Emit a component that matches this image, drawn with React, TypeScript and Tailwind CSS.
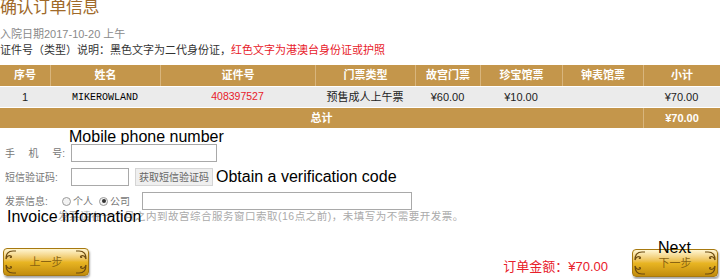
import React from "react";

const cols = "grid-cols-[50px_110px_155px_100px_65px_82px_81px_77px]";

const Corner = ({ className }: { className: string }) => (
  <svg viewBox="0 0 12 10" className={`absolute w-[12px] h-[10px] ${className}`}>
    <path d="M1 9 C1 4 3 1 8 1 L11 1 M1 9 C2 6 4 5 6 6 C7 7 6 8 5 7" fill="none" stroke="#6b4a10" strokeWidth="1.2" />
  </svg>
);

const GoldButton = ({ label }: { label: string }) => (
  <div className="relative w-[86px] h-[28px] rounded-[4px] border border-[#a7790f] bg-gradient-to-b from-[#fff6d2] via-[#e9b623] to-[#c28c0b] shadow-[1px_2px_2px_rgba(0,0,0,0.35)] flex items-center justify-center">
    <Corner className="left-[1px] top-[1px]" />
    <Corner className="right-[1px] top-[1px] -scale-x-100" />
    <Corner className="left-[1px] bottom-[1px] -scale-y-100" />
    <Corner className="right-[1px] bottom-[1px] -scale-100" />
    <span className="text-[11px] text-[#8a6412]">{label}</span>
  </div>
);

const Radio = ({ checked }: { checked?: boolean }) => (
  <span className="inline-flex w-[9px] h-[9px] rounded-full border border-[#9a9a9a] bg-[#f3f3f3] items-center justify-center mr-[2px]">
    {checked && <span className="w-[4px] h-[4px] rounded-full bg-[#333]" />}
  </span>
);

export default function App() {
  const headers = ["序号", "姓名", "证件号", "门票类型", "故宫门票", "珍宝馆票", "钟表馆票", "小计"];
  const row = ["1", "MIKEROWLAND", "408397527", "预售成人上午票", "¥60.00", "¥10.00", "", "¥70.00"];

  return (
    <div className="w-[720px] h-[279px] overflow-hidden bg-white relative font-['Liberation_Sans','Noto_Sans_CJK_SC',sans-serif] text-[11px] text-[#333]">
      <div className="mt-[-3px] h-[22px] leading-[22px] text-[17px] text-[#a06a2a] tracking-[-0.5px]">确认订单信息</div>
      <div className="mt-[8px] leading-[14px] text-[#8a8a8a]">入院日期2017-10-20 上午</div>
      <div className="mt-[2px] leading-[14px] text-[#333]">
        证件号（类型）说明：黑色文字为二代身份证，<span className="text-[#e8202a]">红色文字为港澳台身份证或护照</span>
      </div>

      <div className={`mt-[8px] grid ${cols} gap-y-px bg-white`}>
        {headers.map((h, i) => (
          <div key={h} className={`h-[21px] bg-[#c4964b] text-white font-bold flex items-center justify-center ${i > 0 ? "border-l border-[#d8b57d]" : ""}`}>
            {h}
          </div>
        ))}
        {row.map((c, i) => (
          <div
            key={i}
            className={`h-[20px] bg-[#ebebeb] flex items-center justify-center ${i === 1 ? "font-['Liberation_Mono'] text-[10px] text-black" : ""} ${i === 2 ? "text-[#e8202a] text-[10.5px]" : "text-[#222]"}`}
          >
            {c}
          </div>
        ))}
        <div className="col-span-7 h-[20px] bg-[#c4964b] text-white font-bold flex items-center justify-center">总计</div>
        <div className="h-[20px] bg-[#c4964b] text-white font-bold flex items-center justify-center border-l border-[#d8b57d]">¥70.00</div>
      </div>

      <div className="pl-[69px] h-[16px] leading-[18px] text-[16px] text-black">Mobile phone number</div>

      <div className="flex items-center h-[18px]">
        <span className="w-[71px] pl-[5px] pr-[6px] text-[#777] text-[10px] whitespace-nowrap flex justify-between">
          <span>手</span>
          <span>机</span>
          <span>号:</span>
        </span>
        <div className="w-[146px] h-[18px] border border-[#a9a9a9] bg-white" />
      </div>

      <div className="flex items-center h-[18px] mt-[6px]">
        <span className="w-[71px] pl-[5px] text-[#777] text-[10px] whitespace-nowrap">短信验证码:</span>
        <div className="w-[58px] h-[18px] border border-[#a9a9a9] bg-white" />
        <div className="ml-[6px] w-[78px] h-[18px] bg-[#efefef] border border-[#d5d5d5] text-[10px] text-[#666] flex items-center justify-center whitespace-nowrap">获取短信验证码</div>
        <span className="ml-[3px] text-[16px] text-black leading-[18px] whitespace-nowrap">Obtain a verification code</span>
      </div>

      <div className="flex items-center h-[18px] mt-[6px]">
        <span className="w-[62px] pl-[5px] text-[#777] text-[10px] whitespace-nowrap">发票信息:</span>
        <Radio />
        <span className="text-[#777] text-[10px] mr-[6px]">个人</span>
        <Radio checked />
        <span className="text-[#777] text-[10px] w-[24px]">公司</span>
        <div className="ml-[8px] w-[270px] h-[18px] border border-[#a9a9a9] bg-white" />
      </div>

      <div className="relative h-[13px] leading-[13px]">
        <span className="pl-[58px] text-[10.5px] text-[#aaa] tracking-[0.5px] whitespace-nowrap">发票请在一个月之内到故宫综合服务窗口索取(16点之前)，未填写为不需要开发票。</span>
        <span className="absolute left-[7px] top-[-2px] text-[16px] leading-[18px] text-black whitespace-nowrap">Invoice information</span>
      </div>

      <div className="mt-[25px] flex items-start px-[3px]">
        <GoldButton label="上一步" />
        <div className="ml-auto mr-[24px] mt-[9px] text-[13px] text-[#e8202a]">订单金额：¥70.00</div>
        <div className="relative mt-[1px] mr-[-1px]">
          <GoldButton label="下一步" />
          <span className="absolute left-[26px] top-[-10px] text-[16px] leading-[18px] text-black">Next</span>
        </div>
      </div>
    </div>
  );
}
